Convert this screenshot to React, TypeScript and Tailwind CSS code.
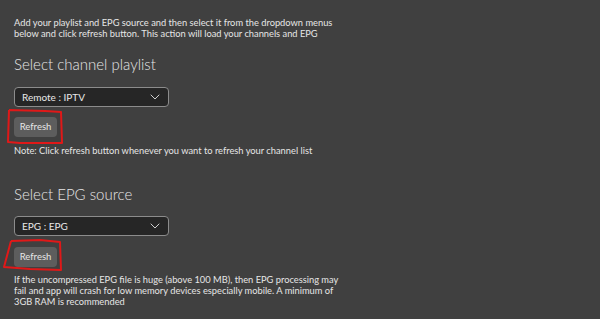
import React from "react";

function Chevron() {
  return (
    <svg width="10" height="6" viewBox="0 0 10 6" fill="none" className="shrink-0">
      <path d="M1 1l4 4 4-4" stroke="#cfcfcf" strokeWidth="1" strokeLinecap="round" strokeLinejoin="round" />
    </svg>
  );
}

function Select({ label }: { label: string }) {
  return (
    <div className="w-[155px] h-[20px] rounded-[4px] border border-[#8c8c8c] bg-[#262626] flex items-center justify-between pl-[7px] pr-[8px]">
      <span className="text-[10px] text-[#e8e8e8] leading-none">{label}</span>
      <Chevron />
    </div>
  );
}

function RefreshButton({ variant }: { variant: 1 | 2 }) {
  return (
    <div className="relative w-[43px] h-[20px]">
      <button className="block w-[43px] h-[20px] rounded-[4px] bg-[#5d5d5d] text-[9.5px] text-[#e6e6e6] leading-none">
        Refresh
      </button>
      <svg
        className="absolute pointer-events-none"
        style={{ left: -14, top: -10, width: 70, height: 40 }}
        viewBox="0 0 70 40"
        fill="none"
      >
        {variant === 1 ? (
          <path
            d="M9 3 L8 35 L20 36 L62 36 L61 5 L45 4 L9 3"
            stroke="#e01818"
            strokeWidth="2"
            strokeLinejoin="round"
          />
        ) : (
          <path
            d="M11 4 L4 30 L30 32 L61 33 L60 5 L40 3 L11 4"
            stroke="#e01818"
            strokeWidth="2"
            strokeLinejoin="round"
          />
        )}
      </svg>
    </div>
  );
}

export default function App() {
  return (
    <div
      className="w-[600px] h-[319px] overflow-hidden bg-[#404040] text-[#e6e6e6] pl-[14px]"
      style={{ fontFamily: 'Lato, "Noto Sans", sans-serif' }}
    >
      <p className="pt-[17px] text-[9.3px] leading-[11px]">
        Add your playlist and EPG source and then select it from the dropdown menus
        <br />
        below and click refresh button. This action will load your channels and EPG
      </p>
      <h2 className="mt-[15px] text-[15px] leading-[20px] font-light">Select channel playlist</h2>
      <div className="mt-[13px]">
        <Select label="Remote : IPTV" />
      </div>
      <div className="mt-[10px]">
        <RefreshButton variant={1} />
      </div>
      <p className="mt-[8px] text-[9.3px] leading-[11px]">
        Note: Click refresh button whenever you want to refresh your channel list
      </p>
      <h2 className="mt-[28px] text-[15px] leading-[20px] font-light">Select EPG source</h2>
      <div className="mt-[12px]">
        <Select label="EPG : EPG" />
      </div>
      <div className="mt-[11px]">
        <RefreshButton variant={2} />
      </div>
      <p className="mt-[7px] text-[9.3px] leading-[11px]">
        If the uncompressed EPG file is huge (above 100 MB), then EPG processing may
        <br />
        fail and app will crash for low memory devices especially mobile. A minimum of
        <br />
        3GB RAM is recommended
      </p>
    </div>
  );
}
